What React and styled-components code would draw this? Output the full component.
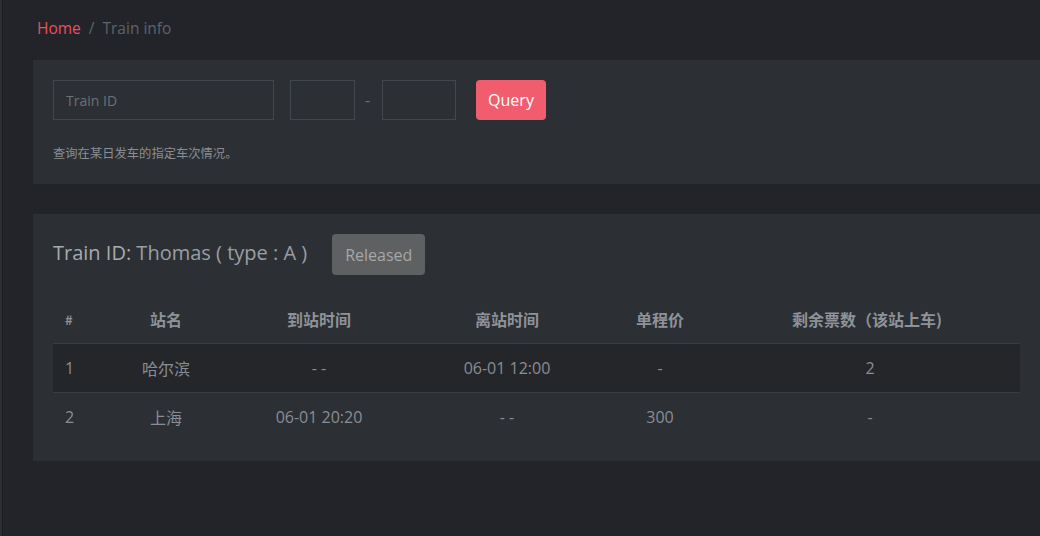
import React from 'react'
import styled, { createGlobalStyle } from 'styled-components'

const GlobalStyle = createGlobalStyle`
  html, body {
    margin: 0;
    padding: 0;
    background: #222429;
    font-family: "Open Sans", "Noto Sans", "Noto Sans CJK SC", sans-serif;
    overflow: hidden;
  }
`

const stops = [
  { no: 1, name: '哈尔滨', arrive: '- -', leave: '06-01 12:00', price: '-', seats: '2' },
  { no: 2, name: '上海', arrive: '06-01 20:20', leave: '- -', price: '300', seats: '-' },
]

function App() {
  return (
    <>
      <GlobalStyle />
      <Layout>
        <SideEdge />
        <Main>
          <Breadcrumb>
            <Crumb active>Home</Crumb>
            <Slash>/</Slash>
            <Crumb>Train info</Crumb>
          </Breadcrumb>

          <Card bottom={22}>
            <QueryRow>
              <Input placeholder="Train ID" width={221} />
              <Input width={65} />
              <Dash>-</Dash>
              <Input width={74} />
              <QueryButton>Query</QueryButton>
            </QueryRow>
            <Help>查询在某日发车的指定车次情况。</Help>
          </Card>

          <Card bottom={20}>
            <TitleRow>
              <Title>
                <Label>Train ID:</Label> Thomas ( type : A )
              </Title>
              <Badge>Released</Badge>
            </TitleRow>
            <Table>
              <colgroup>
                <col style={{ width: 55 }} />
                <col style={{ width: 116 }} />
                <col style={{ width: 190 }} />
                <col style={{ width: 186 }} />
                <col style={{ width: 120 }} />
                <col style={{ width: 300 }} />
              </colgroup>
              <thead>
                <tr>
                  <Th left>#</Th>
                  <Th>站名</Th>
                  <Th>到站时间</Th>
                  <Th>离站时间</Th>
                  <Th>单程价</Th>
                  <Th shift={-6}>剩余票数（该站上车)</Th>
                </tr>
              </thead>
              <tbody>
                {stops.map((s, i) => (
                  <Row key={s.no} striped={i % 2 === 0}>
                    <Td left>{s.no}</Td>
                    <Td>{s.name}</Td>
                    <Td>{s.arrive}</Td>
                    <Td>{s.leave}</Td>
                    <Td>{s.price}</Td>
                    <Td>{s.seats}</Td>
                  </Row>
                ))}
              </tbody>
            </Table>
          </Card>
        </Main>
      </Layout>
    </>
  )
}

const Layout = styled.div`
  display: flex;
  min-height: 536px;
`

const SideEdge = styled.div`
  width: 2px;
  flex-shrink: 0;
  background: #2b2e33;
  border-right: 1px solid #1a1c1f;
`

const Main = styled.div`
  flex: 1;
  padding: 16px 0 0 30px;
  display: flex;
  flex-direction: column;
  gap: 30px;
`

const Breadcrumb = styled.div`
  display: flex;
  align-items: center;
  height: 24px;
  margin-left: 4px;
  margin-bottom: -10px;
  font-size: 15.5px;
`

const Crumb = styled.span`
  color: ${p => (p.active ? '#e9505f' : '#5f636a')};
`

const Slash = styled.span`
  color: #5f636a;
  margin: 0 8px;
`

const Card = styled.div`
  background: #2c2f34;
  padding: 20px 20px ${p => p.bottom}px 20px;
`

const QueryRow = styled.div`
  display: flex;
  align-items: center;
`

const Input = styled.input`
  box-sizing: border-box;
  width: ${p => p.width}px;
  height: 40px;
  margin-right: 16px;
  background: transparent;
  border: 1px solid #42464d;
  color: #9a9da3;
  font-family: inherit;
  font-size: 14px;
  padding: 0 12px;
  outline: none;
  &::placeholder {
    color: #6c7077;
  }
`

const Dash = styled.span`
  color: #6c7077;
  font-size: 16px;
  margin: 0 11px 0 -6px;
  width: 6px;
`

const QueryButton = styled.button`
  height: 40px;
  width: 70px;
  margin-left: 4px;
  padding: 0;
  border: none;
  border-radius: 4px;
  background: #f05d6e;
  color: #fff;
  font-family: inherit;
  font-size: 16px;
`

const Help = styled.div`
  margin-top: 24px;
  font-size: 12.3px;
  line-height: 18px;
  color: #8a8e94;
  font-family: "Noto Sans CJK SC", sans-serif;
`

const TitleRow = styled.div`
  display: flex;
  align-items: center;
  gap: 25px;
`

const Title = styled.div`
  font-size: 20px;
  color: #9b9ea4;
  margin-top: -4px;
`

const Label = styled.span`
  color: #a7aaaf;
`

const Badge = styled.div`
  height: 41px;
  padding: 0 13px;
  display: flex;
  align-items: center;
  background: #5f6062;
  border-radius: 4px;
  color: #a6a7a9;
  font-size: 16px;
`

const Table = styled.table`
  width: 967px;
  margin-top: 20px;
  border-collapse: collapse;
  table-layout: fixed;
  font-size: 16px;
`

const Th = styled.th`
  height: 48px;
  padding: 0 12px;
  text-align: ${p => (p.left ? 'left' : 'center')};
  color: #8f9298;
  font-weight: bold;
  font-family: "Noto Sans CJK SC", sans-serif;
  font-size: ${p => (p.left ? '13px' : '16px')};
  border-bottom: 1px solid #393c42;
  text-indent: ${p => p.shift || 0}px;
`

const Row = styled.tr`
  background: ${p => (p.striped ? '#24262a' : 'transparent')};
  border-bottom: ${p => (p.striped ? '1px solid #393c42' : 'none')};
`

const Td = styled.td`
  height: 48px;
  padding: 0 12px;
  text-align: ${p => (p.left ? 'left' : 'center')};
  color: #8a8e94;
  font-family: "Open Sans", "Noto Sans CJK SC", sans-serif;
`

export default App
